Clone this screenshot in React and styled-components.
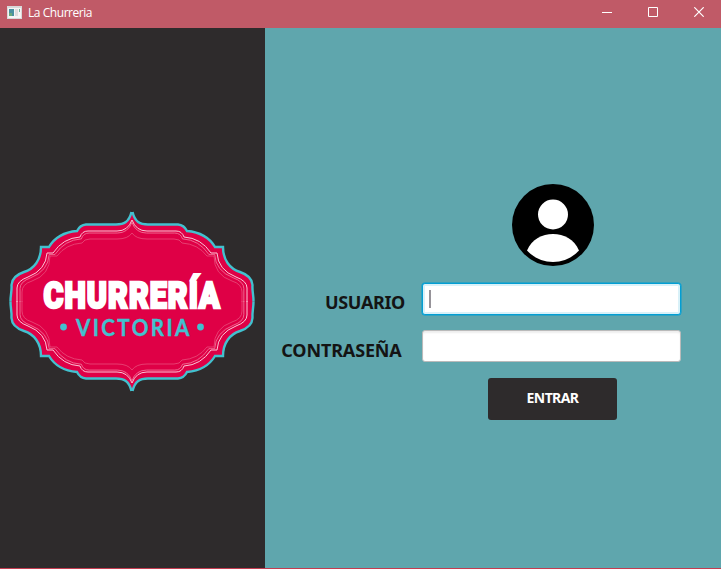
import React from 'react';
import styled, { createGlobalStyle } from 'styled-components';

const GlobalStyle = createGlobalStyle`
  * { box-sizing: border-box; }
  body { margin: 0; background: #fff; font-family: 'Noto Sans', 'Open Sans', sans-serif; }
`;
const Window = styled.div`
  width: 721px; height: 569px; display: flex; flex-direction: column;
  border-bottom: 1px solid #c43c50; overflow: hidden;
`;
const TitleBar = styled.header`
  height: 28px; flex: none; display: flex; align-items: center;
  background: #c05a67; color: #fff;
`;
const AppIcon = styled.svg`margin: -4px 0 0 7px;`;
const Title = styled.span`
  flex: 1; margin: -2px 0 0 6px; font-size: 12px; line-height: 16px;
  font-family: 'Open Sans', 'Noto Sans', sans-serif; letter-spacing: -0.45px;
`;
const Controls = styled.div`display: flex; margin-right: -1px;`;
const Control = styled.button`
  width: 46px; height: 28px; padding: 0 0 4px; border: 0; background: none;
  display: flex; align-items: center; justify-content: center; color: #fff;
`;
const Body = styled.main`flex: 1; display: flex; min-height: 0;`;
const Brand = styled.aside`width: 265px; background: #2e2b2c;`;
const Logo = styled.svg`display: block; margin-top: 172px;`;
const Login = styled.form`
  flex: 1; background: #5fa6ad; padding: 155px 40px 0 0;
  display: flex; flex-direction: column;
`;
const Avatar = styled.svg`display: block; margin: 0 0 16px 246px;`;
const Row = styled.div`display: flex; height: 33px; margin-bottom: 14px;`;
const Label = styled.label`
  width: ${p => p.$width}px; margin-right: ${p => 157 - p.$width}px; text-align: right;
  font-size: 18px; line-height: 25px; padding-top: ${p => p.$drop}px; font-weight: 700; color: #141414;
  white-space: nowrap; letter-spacing: ${p => p.$tracking}px;
`;
const Field = styled.div`
  width: 259px; height: 32px; border-radius: 3px; background: #fff; padding: 6px;
  border: 1px solid ${p => (p.$focused ? '#039ed3' : '#bababa')};
  box-shadow: ${p => (p.$focused ? 'inset 0 0 0 2px #d9f1f8, 0 0 0 0.5px #039ed3' : 'inset 0 2px 2px #eee')};
`;
const Caret = styled.div`width: 2px; height: 18px; background: #969399;`;
const Submit = styled.button`
  width: 129px; height: 42px; margin: 1px 0 0 223px; padding: 0 0 3px; border: 0;
  border-radius: 3px; background: #2e2b2c; color: #fff; letter-spacing: -0.6px;
  font: 700 14px 'Noto Sans', 'Open Sans', sans-serif;
`;

const edge = 'M131.500 12 C129 22 124 24.500 116 24.500 H86 Q80 25 77 31 C65 32 55 37 49 47 H41 C41 60 34 69 24 72 Q12 76 11.500 85 C12 91 10.500 94 10.500 101.500';
const Quarters = ({ d, ...rest }) => (
  <g {...rest}>
    <path d={d} />
    <path d={d} transform="matrix(-1 0 0 1 264 0)" />
    <path d={d} transform="matrix(1 0 0 -1 0 203)" />
    <path d={d} transform="matrix(-1 0 0 -1 264 203)" />
  </g>
);

function ChurreriaLogo() {
  const inner = 'M132 20 Q128 31 117 31 H88 Q82 31 80 37 Q63 38 53 53 H47 Q46 70 28 77 Q17 81 17 88 V102';
  const deep = 'M132 33 Q128 39 117 39 H90 Q84 39 82 43 Q66 44 57 56 H50 Q50 75 32 81 Q22 84 22 92 V102';
  return (
    <Logo width="265" height="203" viewBox="0 0 265 203">
      <Quarters d={edge + ' V103 H133 V12 Z'} fill="#df0046" />
      <Quarters d={edge} fill="none" stroke="#42c1cf" strokeWidth="2.400" />
      <Quarters d={inner} fill="none" stroke="#fbc6d6" strokeWidth="1" />
      <Quarters d={inner} fill="none" stroke="#f283a4" strokeWidth=".8" transform="translate(3.500 2.900) scale(.973 .972)" />
      <Quarters d={deep} fill="none" stroke="#e94c7b" strokeWidth=".8" />
      <text transform="translate(43.500 108) scale(.82 1)" textLength="215" fill="#fff" stroke="#fff" strokeWidth="2.600"
        fontFamily="Roboto, sans-serif" fontWeight="900" fontSize="37">CHURRERÍA</text>
      <text transform="translate(76 136) scale(.9 1)" textLength="126" fill="#42c1cf" stroke="#42c1cf" strokeWidth=".4"
        fontFamily="Lato, sans-serif" fontWeight="700" fontSize="23">VICTORIA</text>
      <circle cx="63.500" cy="127" r="3.400" fill="#42c1cf" />
      <circle cx="200.500" cy="127" r="3.400" fill="#42c1cf" />
    </Logo>
  );
}

export default function App() {
  return (
    <>
      <GlobalStyle />
      <Window>
        <TitleBar>
          <AppIcon width="15" height="13" viewBox="0 0 15 13">
            <path fill="#d8d9d9" d="M0 0h15v13H0z" />
            <path fill="#f5f5f5" d="M1 2h13v10H1z" />
            <path fill="#4a91a0" d="M2 3h5v7H2z" />
            <path fill="#69aa7b" d="M2 7h3v3H2z" />
            <path fill="#dedede" d="M8 3h3v7H8z" />
            <path fill="#70b69c" d="M12 3h1v3h-1z" />
          </AppIcon>
          <Title>La Churreria</Title>
          <Controls>
            <Control type="button" aria-label="Minimizar">
              <svg width="10" height="10"><path d="M0 5.500h10" stroke="currentColor" /></svg>
            </Control>
            <Control type="button" aria-label="Maximizar">
              <svg width="10" height="10"><path d="M.5.5h9v9h-9z" fill="none" stroke="currentColor" /></svg>
            </Control>
            <Control type="button" aria-label="Cerrar">
              <svg width="10" height="10"><path d="M.3.3l9.400 9.400M9.700.3L.3 9.700" stroke="currentColor" strokeWidth="1.200" /></svg>
            </Control>
          </Controls>
        </TitleBar>
        <Body>
          <Brand><ChurreriaLogo /></Brand>
          <Login>
            <Avatar width="84" height="84" viewBox="0 0 84 84">
              <circle cx="42" cy="42" r="41" fill="#000" />
              <circle cx="42" cy="31.500" r="15" fill="#fff" />
              <path d="M16 67.500C21 56 31 51 42 51s21 5 26 16.500C61 75 52 79 42 79s-19-4-26-11.500z" fill="#fff" />
            </Avatar>
            <Row><Label $width={140} $drop={7} $tracking={-0.35}>USUARIO</Label><Field $focused><Caret /></Field></Row>
            <Row><Label $width={136.5} $drop={8} $tracking={-0.15}>CONTRASEÑA</Label><Field /></Row>
            <Submit type="button">ENTRAR</Submit>
          </Login>
        </Body>
      </Window>
    </>
  );
}
